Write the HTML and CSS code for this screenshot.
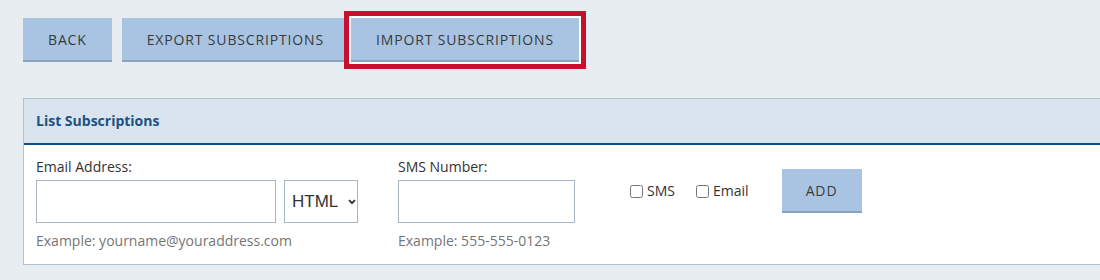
FILE: index.html
```html
<!DOCTYPE html>
<html lang="en">
<head>
<meta charset="utf-8">
<title>List Subscriptions</title>
<link rel="stylesheet" href="styles.css">
</head>
<body>
<div class="page">
  <div class="toolbar">
    <button class="btn">BACK</button>
    <button class="btn">EXPORT SUBSCRIPTIONS</button>
    <button class="btn btn-focus">IMPORT SUBSCRIPTIONS</button>
  </div>

  <section class="panel">
    <header class="panel-head">List Subscriptions</header>
    <div class="panel-body">
      <div class="field field-email">
        <label class="label" for="email">Email Address:</label>
        <div class="inline">
          <input class="input input-email" id="email" type="text">
          <div class="select-wrap">
            <select class="select">
              <option>HTML</option>
              <option>Text</option>
            </select>
            <svg class="chev" width="8" height="6" viewBox="0 0 8 6"><path d="M1 1.2 L4 4.2 L7 1.2" fill="none" stroke="#333" stroke-width="1.9"/></svg>
          </div>
        </div>
        <div class="hint">Example: yourname@youraddress.com</div>
      </div>

      <div class="field field-sms">
        <label class="label" for="sms">SMS Number:</label>
        <input class="input input-sms" id="sms" type="text">
        <div class="hint">Example: 555-555-0123</div>
      </div>

      <div class="checks">
        <label class="check"><input type="checkbox">SMS</label>
        <label class="check"><input type="checkbox">Email</label>
      </div>

      <button class="btn btn-add">ADD</button>
    </div>
  </section>
</div>
</body>
</html>
```

FILE: styles.css
```css
html, body {
  margin: 0;
  padding: 0;
  background: #e8edf2;
  overflow: hidden;
}

body {
  font-family: "Open Sans", "Liberation Sans", sans-serif;
  color: #333;
}

.page {
  padding: 18px 0 0 23px;
}

.toolbar {
  display: flex;
  gap: 10px;
}

.btn {
  font-family: "Open Sans", "Liberation Sans", sans-serif;
  font-size: 14px;
  letter-spacing: 0.85px;
  color: #3a3a3a;
  background: #a8c4e2;
  border: 0;
  border-bottom: 2px solid #8aa2bf;
  height: 44px;
  padding: 0 25px;
  margin: 0;
  cursor: pointer;
}

.btn-focus {
  margin-left: -8px;
  box-shadow: 0 0 0 2px #fff, 0 0 0 7px #c8102e;
}

.panel {
  margin-top: 36px;
  width: 1100px;
  background: #fff;
  border: 1px solid #b3c2d4;
}

.panel-head {
  background: #dae4ef;
  height: 44px;
  line-height: 44px;
  padding-left: 12px;
  font-size: 14px;
  font-weight: 700;
  color: #1b5283;
  border-bottom: 2px solid #0d4f86;
}

.panel-body {
  display: flex;
  align-items: flex-start;
  padding: 12px 12px 13px;
}

.field {
  display: flex;
  flex-direction: column;
}

.label {
  font-size: 14px;
  line-height: 20px;
  margin-bottom: 3px;
}

.inline {
  display: flex;
  gap: 8px;
}

.input {
  box-sizing: border-box;
  height: 43px;
  border: 1px solid #aab6c3;
  background: #fff;
  margin: 0;
  padding: 0 8px;
  font-size: 15px;
}

.input-email { width: 240px; }
.input-sms { width: 177px; }

.select-wrap {
  box-sizing: border-box;
  width: 74px;
  height: 43px;
  border: 1px solid #aab6c3;
  display: flex;
  align-items: center;
}

.select {
  appearance: none;
  -webkit-appearance: none;
  border: 0;
  background: transparent;
  font-family: "Liberation Sans", Arial, sans-serif;
  font-size: 17px;
  color: #333;
  padding: 0 0 0 7px;
  margin: 0;
  width: 54px;
  height: 100%;
  outline: none;
}

.chev {
  margin-left: 9px;
}

.hint {
  font-size: 14px;
  line-height: 20px;
  color: #757575;
  margin-top: 8px;
}

.field-sms {
  margin-left: 40px;
}

.checks {
  display: flex;
  gap: 19px;
  margin-left: 53px;
  margin-top: 24px;
}

.check {
  display: flex;
  align-items: center;
  font-size: 14px;
  line-height: 20px;
  color: #333;
}

.check input {
  margin: 0 4px 0 2px;
  width: 13px;
  height: 13px;
}

.btn-add {
  margin-left: 33px;
  margin-top: 12px;
  width: 80px;
  padding: 0;
}
```
